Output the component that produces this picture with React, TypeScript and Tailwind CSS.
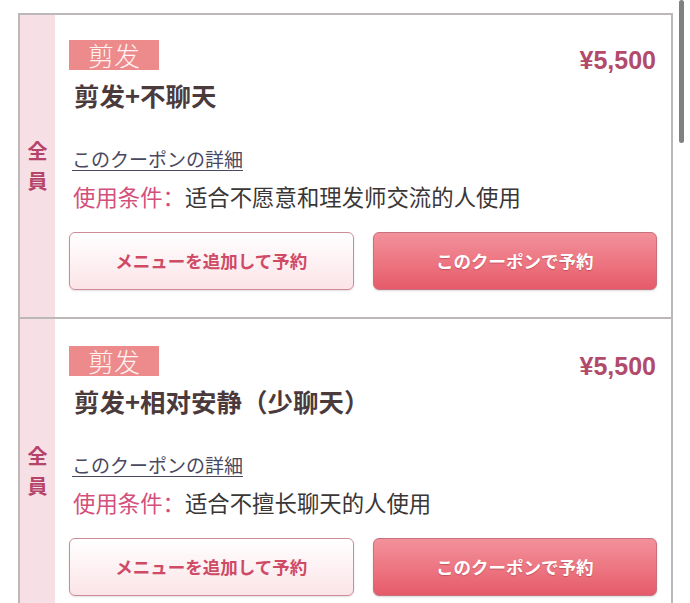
import React from "react";

const cjk = "font-['Noto_Sans_CJK_SC','Noto_Sans_CJK_JP',sans-serif]";
const jp = "font-['Noto_Sans_CJK_JP','Noto_Sans_CJK_SC',sans-serif]";

type Item = { title: string; cond: string; first?: boolean };

function Row({ title, cond, first }: Item) {
  return (
    <div className={`flex ${first ? "" : "border-t-2 border-[#bdb8b8]"}`}>
      <div className="w-[35px] shrink-0 bg-[#f7dfe6] flex flex-col items-center justify-center">
        <span className={`${jp} text-[20px] leading-[30px] font-bold text-[#b5446a]`}>全</span>
        <span className={`${jp} text-[20px] leading-[30px] font-bold text-[#b5446a]`}>員</span>
      </div>
      <div className={`flex-1 pl-[14px] pr-[14px] ${first ? "pt-[25px]" : "pt-[27px]"} pb-[27px] flex flex-col`}>
        <div className="flex justify-between items-start h-[30px]">
          <div className={`${cjk} w-[90px] h-[30px] bg-[#ec8a8c] text-[#fff3f3] text-[26px] leading-[30px] font-light text-center`}>
            剪发
          </div>
          <div className="mt-[6px] mr-[1px] font-['Liberation_Sans',Arial,sans-serif] font-bold text-[25px] leading-[28px] text-[#b24a6c]">
            ¥5,500
          </div>
        </div>
        <div className={`${cjk} mt-[9px] ml-[5px] text-[25.5px] leading-[32px] font-bold text-[#4b3a3c]`}>{title}</div>
        <div className={`${jp} mt-[35px] ml-[3px] text-[19px] leading-[26px] text-[#4a4860] underline underline-offset-[3px] decoration-[1px]`}>
          このクーポンの詳細
        </div>
        <div className={`${cjk} mt-[10px] ml-[4px] text-[22.4px] leading-[28px] text-[#3a3636]`}>
          <span className="text-[#d4507a]">使用条件：</span>
          {cond}
        </div>
        <div className="mt-[22px] grid grid-cols-2 gap-[19px]">
          <button className={`${jp} h-[58px] rounded-[6px] border border-[#cf8a98] bg-gradient-to-b from-white to-[#fbe4e8] text-[#cf4a64] font-bold text-[17.5px] shadow-[0_1px_2px_rgba(0,0,0,0.12)]`}>
            メニューを追加して予約
          </button>
          <button className={`${jp} h-[58px] rounded-[6px] border border-[#c8707e] bg-gradient-to-b from-[#f2919b] to-[#e65a6a] text-white font-bold text-[17.5px] shadow-[0_1px_2px_rgba(0,0,0,0.15)] [text-shadow:0_1px_1px_rgba(120,30,40,0.35)]`}>
            このクーポンで予約
          </button>
        </div>
      </div>
    </div>
  );
}

export default function App() {
  return (
    <div className="relative w-[690px] h-[603px] overflow-hidden bg-white">
      <div className="ml-[18px] mt-[13px] w-[655px] border-2 border-[#bdb8b8] bg-white">
        <Row first title="剪发+不聊天" cond="适合不愿意和理发师交流的人使用" />
        <Row title="剪发+相对安静（少聊天）" cond="适合不擅长聊天的人使用" />
      </div>
      <div className="absolute left-[679px] top-0 w-[5px] h-[143px] rounded-full bg-[#808080]" />
    </div>
  );
}
